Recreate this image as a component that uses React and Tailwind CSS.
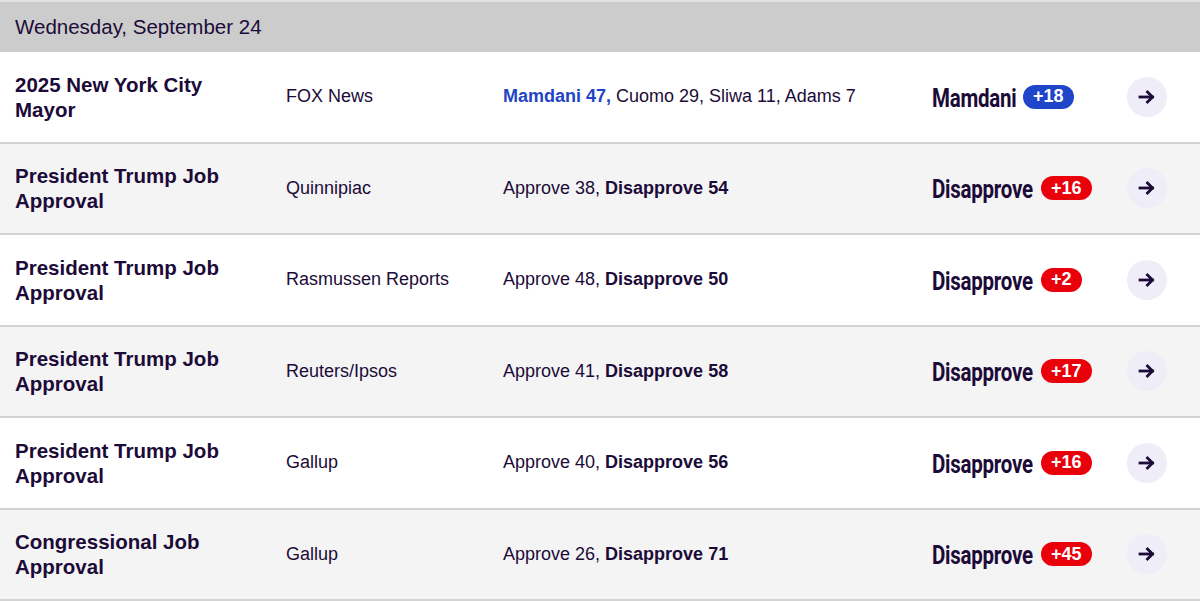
import React from "react";

const polls = [
    {
        race: "2025 New York City Mayor",
        pollster: "FOX News",
        lead: "Mamdani 47,",
        rest: " Cuomo 29, Sliwa 11, Adams 7",
        leadFirst: true,
        winner: "Mamdani",
        winnerWidth: "w-[85px]",
        spread: "+18",
        color: "blue",
    },
    { race: "President Trump Job Approval", pollster: "Quinnipiac", approve: 38, disapprove: 54, winner: "Disapprove", winnerWidth: "w-[103px]", spread: "+16" },
    { race: "President Trump Job Approval", pollster: "Rasmussen Reports", approve: 48, disapprove: 50, winner: "Disapprove", winnerWidth: "w-[103px]", spread: "+2" },
    { race: "President Trump Job Approval", pollster: "Reuters/Ipsos", approve: 41, disapprove: 58, winner: "Disapprove", winnerWidth: "w-[103px]", spread: "+17" },
    { race: "President Trump Job Approval", pollster: "Gallup", approve: 40, disapprove: 56, winner: "Disapprove", winnerWidth: "w-[103px]", spread: "+16" },
    { race: "Congressional Job Approval", pollster: "Gallup", approve: 26, disapprove: 71, winner: "Disapprove", winnerWidth: "w-[103px]", spread: "+45" },
];

const PollRow = ({ poll, shaded }) => {
    return (
        <div
            className={`flex items-center h-[91.5px] border-b-2 border-[#d3d3d3] px-[15px] ${shaded ? "bg-[#f4f4f4]" : "bg-white"}`}
        >
            {/* Race */}
            <div className="w-[271px] pr-8 text-[20.5px] leading-[25px] font-bold text-[#1c0b38]">{poll.race}</div>

            {/* Pollster */}
            <div className="w-[217px] text-[18px] text-[#1c0b38]">{poll.pollster}</div>

            {/* Results */}
            <div className="w-[429px] text-[18px] text-[#1c0b38]">
                {poll.leadFirst ? (
                    <>
                        <span className="font-bold text-[#1f45c4]">{poll.lead}</span>
                        {poll.rest}
                    </>
                ) : (
                    <>
                        Approve {poll.approve}, <span className="font-bold">Disapprove {poll.disapprove}</span>
                    </>
                )}
            </div>

            {/* Winner + spread */}
            <div className="w-[195px] flex items-center gap-[6px]">
                <span className={`${poll.winnerWidth} inline-block whitespace-nowrap overflow-visible`}>
                    <span
                        className="inline-block origin-left scale-x-[0.82] translate-y-[3px] text-[25px] leading-none font-bold text-[#1c0b38] tracking-[-0.3px]"
                        style={{ fontFamily: 'Roboto, "Liberation Sans", sans-serif' }}
                    >
                        {poll.winner}
                    </span>
                </span>
                <span
                    className={`h-6 px-[10px] rounded-full flex items-center text-[18px] font-bold text-white ${poll.color === "blue" ? "bg-[#1f45c9]" : "bg-[#ea000a]"}`}
                >
                    {poll.spread}
                </span>
            </div>

            {/* Arrow */}
            <div className="w-10 h-10 rounded-full bg-[#efedf8] flex items-center justify-center">
                <svg width="18" height="16" viewBox="0 0 18 16" fill="none" stroke="#1c0b38" strokeWidth="2.8" strokeLinecap="square">
                    <path d="M2 8h12.5" />
                    <path d="M9.5 3L14.5 8l-5 5" />
                </svg>
            </div>
        </div>
    );
};

export default function App() {
    return (
        <div className="w-[1200px] h-[601px] overflow-hidden bg-white" style={{ fontFamily: '"Liberation Sans", Arial, sans-serif' }}>
            {/* Date header */}
            <div className="h-[52px] bg-[#cccccc] border-t-2 border-[#e2e2e2] flex items-center px-[15px]">
                <span className="text-[20.5px] text-[#1c0b38]">Wednesday, September 24</span>
            </div>

            {polls.map((poll, i) => (
                <PollRow key={i} poll={poll} shaded={i % 2 === 1} />
            ))}
        </div>
    );
}
